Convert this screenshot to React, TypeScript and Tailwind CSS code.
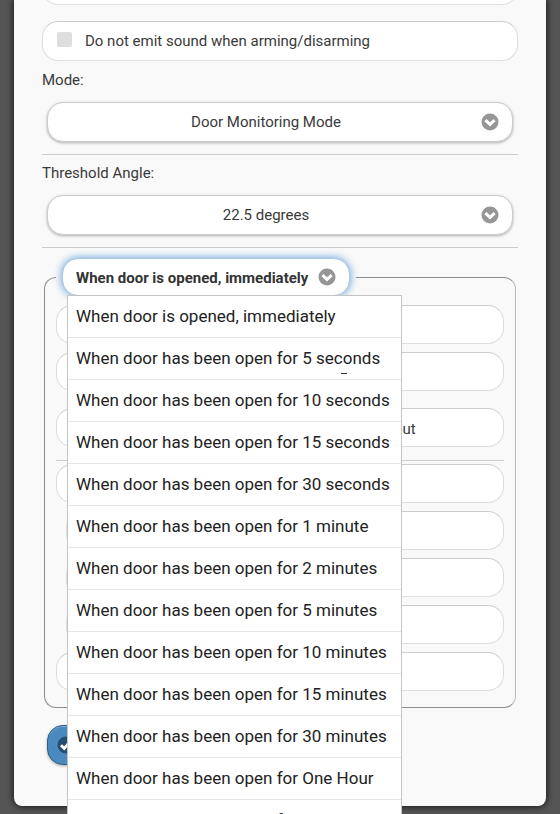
import { useState } from 'react'
import type { ReactNode } from 'react'

const delays = [
  'When door is opened, immediately',
  'When door has been open for 5 seconds',
  'When door has been open for 10 seconds',
  'When door has been open for 15 seconds',
  'When door has been open for 30 seconds',
  'When door has been open for 1 minute',
  'When door has been open for 2 minutes',
  'When door has been open for 5 minutes',
  'When door has been open for 10 minutes',
  'When door has been open for 15 minutes',
  'When door has been open for 30 minutes',
  'When door has been open for One Hour',
  'When door has been open for 2 Hours'
]

const rowClass = 'flex h-[39px] items-center rounded-2xl border border-[#ddd] border-t-[#ccc] bg-white'

function ChevronBadge({ className }: { className: string }) {
  return (
    <svg
      viewBox="0 0 18 18"
      aria-hidden="true"
      className={`pointer-events-none absolute top-1/2 size-[18px] -translate-y-1/2 ${className}`}
    >
      <circle cx="9" cy="9" r="8.5" fill="#969696" />
      <path d="M4.4 7.2 9 11.4l4.6-4.2" fill="none" stroke="#fff" strokeWidth="3" />
    </svg>
  )
}

interface SelectFieldProps {
  id: string
  label: string
  options: string[]
}

function SelectField({ id, label, options }: SelectFieldProps) {
  return (
    <div className="pt-2">
      <label htmlFor={id} className="block leading-5">
        {label}
      </label>
      <div className="relative mx-[5px] mt-3">
        <select
          id={id}
          className="block h-10 w-full appearance-none rounded-2xl border border-[#ccc] bg-white pr-8 pl-1 text-center [text-align-last:center] shadow-[0_1px_3px_rgba(0,0,0,0.3)] outline-none"
        >
          {options.map((option) => (
            <option key={option}>{option}</option>
          ))}
        </select>
        <ChevronBadge className="right-[14px]" />
      </div>
      <hr className="mt-3 border-[#ccc]" />
    </div>
  )
}

function Row({ indent, children }: { indent?: boolean; children?: ReactNode }) {
  return <div className={indent ? `${rowClass} ml-[10px]` : rowClass}>{children}</div>
}

export default function App() {
  const [silent, setSilent] = useState(false)
  const [delay, setDelay] = useState(delays[0])
  const [open, setOpen] = useState(true)

  return (
    <main className="min-h-screen overflow-hidden bg-[#555] px-[14px] pb-2 font-[Roboto,sans-serif] text-[15px] text-[#3a3a3a]">
      <form className="rounded-b-lg bg-[#f9f9f9] px-7 pb-[41px] shadow-[0_0_6px_1px_rgba(0,0,0,0.75)]">
        <div className="h-[5px] overflow-hidden">
          <div className="-mt-[34px]">
            <Row />
          </div>
        </div>

        <label className="mt-4 flex h-10 items-center rounded-2xl border border-[#ddd] border-t-[#ccc] bg-white pl-[14px]">
          <input
            type="checkbox"
            checked={silent}
            onChange={(e) => setSilent(e.target.checked)}
            className="mb-[3px] size-[15px] appearance-none rounded-[2px] bg-[#dedede] checked:bg-[#4a8abf]"
          />
          <span className="ml-[13px]">Do not emit sound when arming/disarming</span>
        </label>

        <div className="pt-px">
          <SelectField id="mode" label="Mode:" options={['Door Monitoring Mode']} />
          <SelectField id="angle" label="Threshold Angle:" options={['22.5 degrees']} />
        </div>

        <fieldset className="mx-[2px] mt-[10px] min-w-0 rounded-xl border border-[#8c8c8c] border-r-[#bbb] px-[11px] pb-4">
          <legend className="px-[6px]">
            <div className="relative w-72">
              <select
                aria-label="Notify"
                value={delay}
                onChange={(e) => setDelay(e.target.value)}
                onClick={() => setOpen(!open)}
                className="block h-[38px] w-full appearance-none rounded-2xl border border-[#a9c6e3] bg-white pt-[2px] pr-8 pl-[13px] font-bold text-[#333] shadow-[0_0_8px_#5b9bd8] outline-none"
              >
                {delays.map((item) => (
                  <option key={item}>{item}</option>
                ))}
              </select>
              <ChevronBadge className="right-[14px]" />

              {open && (
                <ul
                  role="listbox"
                  aria-label="Notify options"
                  className="absolute top-[37px] left-[5px] z-10 w-[335px] border border-[#c4c4c4] bg-white text-[17px] text-[#222]"
                >
                  {delays.map((item, index) => (
                    <li
                      key={item}
                      role="option"
                      aria-selected={item === delay}
                      onClick={() => {
                        setDelay(item)
                        setOpen(false)
                      }}
                      className="relative h-[42px] border-b border-[#e6e6e6] pl-2 leading-[41px] whitespace-nowrap"
                    >
                      {item}
                      {index === 1 && <span className="absolute bottom-[5px] left-[273px] h-px w-[6px] bg-[#333]" />}
                    </li>
                  ))}
                </ul>
              )}
            </div>
          </legend>

          <div className="flex flex-col gap-2 pt-[9px]">
            <Row />
            <Row />
          </div>
          <div className="mt-[17px]">
            <Row>
              <span className="pt-[3px] pl-[337px]">out</span>
            </Row>
          </div>
          <hr className="mt-[13px] border-[#ccc]" />
          <div className="mt-[3px] flex flex-col gap-2">
            <Row />
            <Row indent />
            <Row indent />
            <Row indent />
            <Row />
          </div>
        </fieldset>

        <button
          type="submit"
          aria-label="Save"
          className="mt-[17px] ml-[5px] flex h-10 w-32 items-center rounded-2xl border border-[#2f5f85] bg-[#4a8abf] pl-[9px] shadow-[inset_0_1px_0_#7db0d8,0_1px_3px_rgba(0,0,0,0.3)]"
        >
          <svg viewBox="0 0 18 18" aria-hidden="true" className="size-[18px]">
            <circle cx="9" cy="9" r="8.5" fill="#244f72" />
            <path d="m4 9.2 3.2 3.3L13.6 5" fill="none" stroke="#fff" strokeWidth="2.8" />
          </svg>
        </button>
      </form>
    </main>
  )
}
